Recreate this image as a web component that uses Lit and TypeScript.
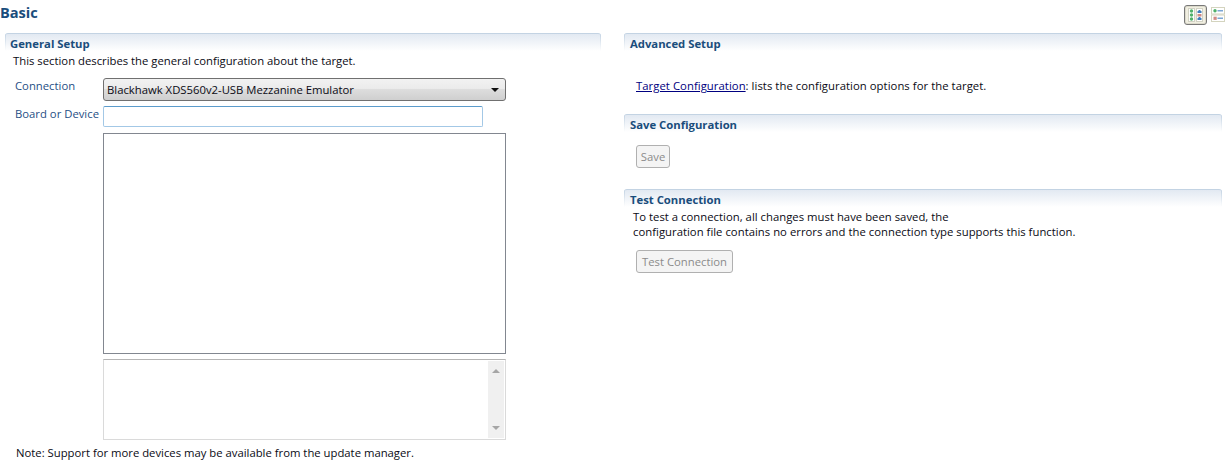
import { LitElement, html, css } from "lit";
import { customElement } from "lit/decorators.js";

@customElement("app-root")
export class AppRoot extends LitElement {
  static styles = css`
    :host { display: block; width: 1229px; height: 476px; background: #fff; overflow: hidden;
      font-family: "Open Sans", "Noto Sans", sans-serif; font-size: 11.3px; color: #0a0a14; }
    * { box-sizing: border-box; }
    .top { height: 33px; display: flex; justify-content: space-between; align-items: flex-start; padding: 5px 4px 0 0; position: relative; }
    h1 { margin: -3px 0 0; font-size: 14.6px; line-height: 20px; font-weight: 700; color: #1a4d7c; }
    .tools { display: flex; gap: 4px; align-items: flex-start; }
    .tool-on { width: 23px; height: 20px; border: 1px solid #787878; border-radius: 3px; background: #f1efe2; display: flex; align-items: center; justify-content: center; box-shadow: inset 0 0 0 1px #dcdacb; }
    .tool { width: 14px; height: 15px; margin-top: 2px; display: flex; }
    .cols { display: grid; grid-template-columns: 596px 598px; column-gap: 23px; padding-left: 5px; }
    .sec-h { height: 18px; border-top: 1px solid #c3d3e3; border-radius: 3px 3px 0 0;
      background:
        linear-gradient(#c3d3e3, #ffffff) left top / 1px 100% no-repeat,
        linear-gradient(#c3d3e3, #ffffff) right top / 1px 100% no-repeat,
        linear-gradient(#e2e9f2, #ffffff);
      color: #1a4d7c; font-weight: 700; line-height: 18px; padding: 1px 0 0 6px; }
    .general .sec-h { padding-left: 5px; }
    .desc { margin: 0; line-height: 15px; }
    .general .desc { padding: 2px 0 0 8px; }
    .form { display: grid; grid-template-columns: 88px 403px; padding: 10px 0 0 10px; }
    .lbl { color: #1f4f85; line-height: 15px; }
    .select { height: 23px; border: 1px solid #707070; border-radius: 3px; background: linear-gradient(#f2f2f2 0%, #ebebeb 45%, #dddddd 50%, #cfcfcf 100%);
      display: flex; align-items: center; justify-content: space-between; padding: 0 6px 0 3px; line-height: 15px; }
    .arrow { width: 0; height: 0; border-left: 4px solid transparent; border-right: 4px solid transparent; border-top: 4px solid #111; }
    .lbl-board { margin-top: 5px; }
    .input { margin-top: 5px; width: 380px; height: 21px; border: 1px solid #a3c8e6; border-top-color: #5b9bcb; border-radius: 2px; background: #fff; }
    .list { grid-column: 2; margin-top: 6px; height: 221px; border: 1px solid #828790; background: #fff; }
    .details { grid-column: 2; margin-top: 5px; height: 81px; border: 1px solid #dadada; border-top-color: #b5b5b5; background: #fff; display: flex; justify-content: flex-end; padding: 1px; }
    .sb { width: 16px; background: #f0f0f0; display: flex; flex-direction: column; justify-content: space-between; align-items: center; padding: 8px 0; }
    .up { width: 0; height: 0; border-left: 4px solid transparent; border-right: 4px solid transparent; border-bottom: 4px solid #a6a6a6; }
    .down { width: 0; height: 0; border-left: 4px solid transparent; border-right: 4px solid transparent; border-top: 4px solid #a6a6a6; }
    .note { margin: 5px 0 0 11px; line-height: 15px; }
    .adv { padding: 27px 0 0 12px; height: 63px; line-height: 15px; letter-spacing: 0.05px; }
    a { color: #000080; text-decoration: underline; }
    .save { height: 57px; padding: 13px 0 0 12px; }
    .btn { display: flex; align-items: center; justify-content: center; height: 23px; border: 1px solid #b0b0b0; border-radius: 3px; background: #f4f4f4; color: #8b8b8b; }
    .btn-save { width: 34px; }
    .btn-test { width: 97px; }
    .test .desc { padding: 2px 0 0 9px; letter-spacing: 0.02px; }
    .test .bw { padding: 11px 0 0 12px; }
  `;

  render() {
    return html`
      <div class="top">
        <h1>Basic</h1>
        <div class="tools">
          <div class="tool-on">
            <svg width="15" height="14" viewBox="0 0 15 14">
              <rect x="0.5" y="0.5" width="6" height="13" fill="#fff" stroke="#d2d2c4"/>
              <rect x="8.5" y="0.5" width="6" height="13" fill="#fff" stroke="#d2d2c4"/>
              <g fill="#4fb06a">
                <circle cx="3.5" cy="3" r="1.7"/>
                <circle cx="3.5" cy="7" r="1.7"/>
                <circle cx="3.5" cy="11" r="1.7"/>
              </g>
              <g fill="#3f7dbd">
                <path d="M10.5 2h2v1h1v2h-4V3h1z"/>
                <path d="M10.5 9h2v1h1v2h-4v-2h1z"/>
              </g>
              <rect x="9.5" y="6" width="4" height="2.5" fill="#d08a84"/>
            </svg>
          </div>
          <div class="tool">
            <svg width="14" height="15" viewBox="0 0 14 15">
              <rect x="0.5" y="0.5" width="13" height="6.5" fill="#fff" stroke="#d4d4bf"/>
              <rect x="0.5" y="8" width="13" height="6.5" fill="#fff" stroke="#d4d4bf"/>
              <circle cx="4" cy="3.7" r="1.7" fill="#4fb06a"/>
              <rect x="6.5" y="3" width="5.5" height="1.5" fill="#7ba6d4"/>
              <rect x="2.5" y="9.7" width="3.2" height="3.2" fill="#d08a84"/>
              <rect x="6.5" y="10.5" width="5.5" height="1.5" fill="#7ba6d4"/>
            </svg>
          </div>
        </div>
      </div>
      <div class="cols">
        <section class="general">
          <div class="sec-h">General Setup</div>
          <p class="desc">This section describes the general configuration about the target.</p>
          <div class="form">
            <div class="lbl">Connection</div>
            <div class="select"><span>Blackhawk XDS560v2-USB Mezzanine Emulator</span><span class="arrow"></span></div>
            <div class="lbl lbl-board">Board or Device</div>
            <div class="input"></div>
            <div class="list"></div>
            <div class="details"><div class="sb"><span class="up"></span><span class="down"></span></div></div>
          </div>
          <p class="note">Note: Support for more devices may be available from the update manager.</p>
        </section>
        <section>
          <div class="sec-h">Advanced Setup</div>
          <div class="adv"><a>Target Configuration</a>: lists the configuration options for the target.</div>
          <div class="sec-h">Save Configuration</div>
          <div class="save"><span class="btn btn-save">Save</span></div>
          <div class="test">
            <div class="sec-h">Test Connection</div>
            <p class="desc">To test a connection, all changes must have been saved, the<br>configuration file contains no errors and the connection type supports this function.</p>
            <div class="bw"><span class="btn btn-test">Test Connection</span></div>
          </div>
        </section>
      </div>
    `;
  }
}
